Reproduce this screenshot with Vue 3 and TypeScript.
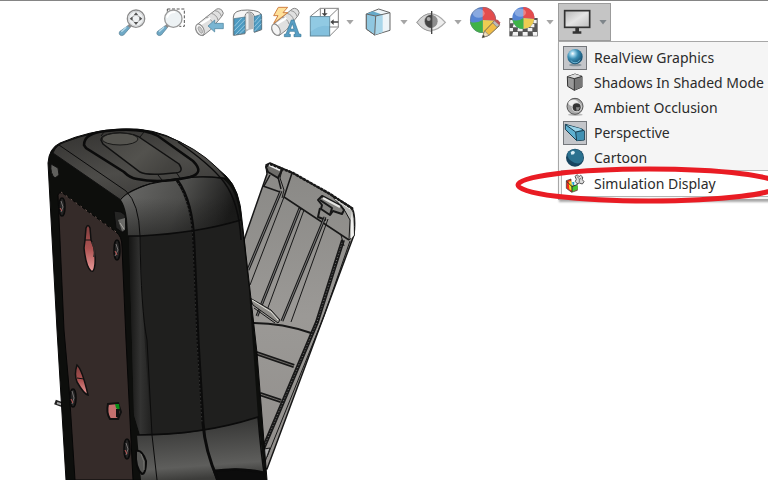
<script setup lang="ts">
import { ref } from 'vue'

interface DisplayOption {
  id: string
  label: string
  on: boolean
}

const menuOpen = ref(true)
const current = ref('simulation')
const options = ref<DisplayOption[]>([
  { id: 'realview', label: 'RealView Graphics', on: true },
  { id: 'shadows', label: 'Shadows In Shaded Mode', on: false },
  { id: 'occlusion', label: 'Ambient Occlusion', on: false },
  { id: 'perspective', label: 'Perspective', on: true },
  { id: 'cartoon', label: 'Cartoon', on: false },
  { id: 'simulation', label: 'Simulation Display', on: false },
])

function toggle(option: DisplayOption) {
  option.on = !option.on
}
</script>

<template>
  <div class="app">
    <header class="toolbar">
      <button class="tool" type="button" aria-label="Zoom to Fit">
        <svg viewBox="12 9 114 114">
          <path d="M54 77 60 83 41 105Q34 109 29 104 25 99 30 94Z" fill="#6fa9c6" stroke="#557c91" stroke-width="2" />
          <path d="M34 95 49 82" stroke="#b9dcec" stroke-width="4" />
          <path d="M53 77 60 84 66 77 59 70Z" fill="#888" />
          <circle cx="78" cy="56" r="26" fill="#f0f2f3" stroke="#8c8c8c" stroke-width="4" />
          <circle cx="78" cy="56" r="22" fill="none" stroke="#d2d4d6" stroke-width="3" />
          <path d="M78 37 85 46H71ZM78 75 71 66H85ZM59 56 68 49V63ZM97 56 88 63V49Z" fill="#555" />
          <path d="M70 51V48H73M83 48H86V51M86 61V64H83M73 64H70V61" fill="none" stroke="#999" stroke-width="2" />
        </svg>
      </button>
      <button class="tool" type="button" aria-label="Zoom to Area">
        <svg viewBox="126 9 114 114">
          <path d="M172 27H223V79H208M172 27V35" fill="none" stroke="#555" stroke-width="3" stroke-dasharray="9 5" />
          <path d="M166 77 172 83 154 105Q147 109 142 104 138 99 143 94Z" fill="#6fa9c6" stroke="#557c91" stroke-width="2" />
          <path d="M147 95 162 82" stroke="#b9dcec" stroke-width="4" />
          <path d="M165 77 172 84 178 77 171 70Z" fill="#888" />
          <circle cx="190" cy="56" r="26" fill="#edf2f4" stroke="#9a9a9a" stroke-width="4" />
          <path d="M171 53Q176 35 196 36" fill="none" stroke="#fff" stroke-width="6" />
        </svg>
      </button>
      <button class="tool" type="button" aria-label="Previous View">
        <svg viewBox="240 9 114 114">
          <path d="M315 31Q325 21 336 31 344 40 336 48L302 89 279 107Q260 106 257 87L261 74 288 52Z" fill="#e0e0e0" stroke="#858585" stroke-width="3" />
          <path d="M287 52Q304 54 309 72M304 40Q320 44 324 60M315 32Q330 34 334 49" fill="none" stroke="#999" stroke-width="3" />
          <path d="M271 73 301 54" stroke="#fff" stroke-width="7" />
          <ellipse cx="270" cy="89" rx="11" ry="18" transform="rotate(-28 270 89)" fill="#f5f5f5" stroke="#888" stroke-width="3" />
          <ellipse cx="271" cy="90" rx="5" ry="11" transform="rotate(-28 271 90)" fill="#c8c8c8" stroke="#999" stroke-width="2" />
          <path d="M294 78 314 60V70H340V86H314V96Z" fill="#79b5d2" stroke="#477d98" stroke-width="2" />
        </svg>
      </button>
      <button class="tool" type="button" aria-label="Section View">
        <svg viewBox="9 9 114 114">
          <path d="M25 51Q25 29 68 30 110 31 110 49V89L88 97V52Q87 37 72 36 59 37 60 55V101L25 106Z" fill="#f5f5f5" stroke="#777" stroke-width="3" />
          <path d="M63 46Q72 28 84 45V87Q72 87 62 96Z" fill="#b8b8b8" />
          <path d="M67 41V88" stroke="#eee" stroke-width="7" />
          <path d="M27 56 60 51V99L27 105ZM87 50 109 43V88L87 96Z" fill="#4d9bc2" stroke="#497085" stroke-width="2" />
          <path d="M28 79 50 54M28 92 60 59M31 104 60 74M43 102 60 86M88 67 106 45M88 80 109 57M88 94 109 71" stroke="#b9dced" stroke-width="2" />
        </svg>
      </button>
      <button class="tool" type="button" aria-label="Dynamic Annotation Views">
        <svg viewBox="123 9 114 114">
          <path d="M198 30Q208 20 219 30 226 38 219 47L184 90 162 107Q143 106 140 87L144 74 171 52Z" fill="#e0e0e0" stroke="#858585" stroke-width="3" />
          <path d="M171 52Q187 55 192 72M186 40Q202 44 206 60M197 32Q212 34 216 49" fill="none" stroke="#999" stroke-width="3" />
          <path d="M155 72 184 54" stroke="#fff" stroke-width="7" />
          <ellipse cx="153" cy="89" rx="11" ry="18" transform="rotate(-28 153 89)" fill="#f5f5f5" stroke="#888" stroke-width="3" />
          <path d="M160 22H188L174 38H188L146 70 159 47H146Z" fill="#ffe19a" stroke="#d08145" stroke-width="3" />
          <path d="M178 110V103L183 102 199 60H207L222 102 228 103V110H207V103L212 102 209 94H194L191 102 196 103V110ZM196 87H207L202 71Z" fill="#579ec5" stroke="#397897" stroke-width="2" fill-rule="evenodd" />
        </svg>
      </button>
      <button class="tool split" type="button" aria-label="View Orientation">
        <svg viewBox="237 9 114 114">
          <path d="M256 49 286 25H340V82L314 108M286 25V50M286 81H340M314 50 340 25" fill="none" stroke="#858585" stroke-width="3" />
          <rect x="256" y="50" width="58" height="58" fill="#83c0dd" stroke="#5e8799" stroke-width="3" />
          <path d="M257 51H313V79Q286 71 257 95Z" fill="#9bd0e8" opacity=".6" />
          <path d="M299 27V43M340 66H324" stroke="#444" stroke-width="4" />
          <path d="M290 40H308L299 49ZM326 58V75L316 66Z" fill="#444" />
        </svg>
        <i class="caret"></i>
      </button>
      <button class="tool split" type="button" aria-label="Display Style">
        <svg viewBox="54 9 114 114">
          <path d="M79 42 116 27 150 38V91L104 105 79 87Z" fill="#eef5f8" stroke="#666" stroke-width="3" />
          <path d="M79 42 107 48V104L79 87Z" fill="#8fc7e0" />
          <path d="M79 42 98 34 128 44 107 48Z" fill="#65aaca" />
          <path d="M107 48 128 44V97L105 104Z" fill="#a9d6e9" />
          <path d="M79 42 107 48 150 38M107 48 104 105M79 42V87L104 105" fill="none" stroke="#666" stroke-width="3" />
        </svg>
        <i class="caret"></i>
      </button>
      <button class="tool split" type="button" aria-label="Hide/Show Items">
        <svg viewBox="216 9 114 114">
          <path d="M231 67Q272 16 316 67 272 115 231 67Z" fill="#eee" stroke="#aaa" stroke-width="4" />
          <path d="M231 67Q250 40 274 41V94Q247 91 231 67Z" fill="#d5d5d5" stroke="#999" stroke-width="3" />
          <circle cx="273" cy="64" r="20" fill="#8d8d8d" />
          <path d="M275 44A20 20 0 0 0 275 84Z" fill="#454545" />
          <circle cx="266" cy="57" r="6" fill="#aaa" />
          <path d="M275 33V102" stroke="#444" stroke-width="4" />
        </svg>
        <i class="caret"></i>
      </button>
      <button class="tool" type="button" aria-label="Edit Appearance">
        <svg viewBox="18 9 114 114">
          <circle cx="69" cy="60" r="39" fill="#5684d3" />
          <path d="M68 60V21A39 39 0 0 1 108 62Z" fill="#e44c4d" />
          <path d="M68 60 108 62A39 39 0 0 1 68 99Z" fill="#edcc52" />
          <path d="M68 60V99A39 39 0 0 1 30 65Q46 72 68 60Z" fill="#3fb346" />
          <ellipse cx="56" cy="40" rx="18" ry="13" fill="#fff" opacity=".3" />
          <circle cx="69" cy="60" r="38" fill="none" stroke="#777" stroke-width="2" opacity=".6" />
          <path d="M67 113 74 93 103 63 118 77 87 106Z" fill="#f1bd47" stroke="#76684d" stroke-width="3" />
          <path d="M67 113 74 93 87 106Z" fill="#f2dfbb" stroke="#777" stroke-width="2" />
          <path d="M67 113 70 105 75 109Z" fill="#333" />
          <path d="M98 68 105 61 119 74 111 82Z" fill="#bbb" stroke="#777" stroke-width="2" />
          <path d="M103 62Q108 56 114 60L120 67Q121 71 118 76Z" fill="#bc5657" />
        </svg>
      </button>
      <button class="tool split" type="button" aria-label="Apply Scene">
        <svg viewBox="132 9 114 114">
          <path d="M148 54H233V109H148Z" fill="#555" />
          <path d="M151 60H162V70H150ZM218 60H230V70H220ZM161 72H173V82H158ZM211 72H223V82H211ZM149 84H159V94H149ZM174 84H188V94H172ZM203 84H217V94H203ZM159 96H174V107H157ZM188 96H203V107H188ZM218 96H231V107H219Z" fill="#f2f2f2" />
          <circle cx="190" cy="54" r="33" fill="#5684d3" />
          <path d="M190 54V21A33 33 0 0 1 223 57Z" fill="#e44c4d" />
          <path d="M190 54 223 57A33 33 0 0 1 190 87Z" fill="#edcc52" />
          <path d="M190 54V87A33 33 0 0 1 157 59Q174 66 190 54Z" fill="#3fb346" />
          <ellipse cx="181" cy="38" rx="17" ry="12" fill="#fff" opacity=".3" />
        </svg>
        <i class="caret"></i>
      </button>

      <div class="settings">
        <button class="tool settings-button" type="button" aria-label="View Settings" :aria-expanded="menuOpen" @click="menuOpen = !menuOpen">
          <svg viewBox="294 9 114 114">
            <defs>
              <linearGradient id="screen" x2="1" y2="1">
                <stop stop-color="#b5b5b5" />
                <stop offset=".5" stop-color="#e4e4e4" />
                <stop offset="1" stop-color="#bdbdbd" />
              </linearGradient>
            </defs>
            <rect x="314" y="32" width="75" height="50" fill="url(#screen)" stroke="#333" stroke-width="5" />
            <path d="M346 83H357V94H364V101H338V94H346Z" fill="#333" />
          </svg>
          <i class="caret"></i>
        </button>

        <div v-if="menuOpen" class="menu" role="menu">
          <button
            v-for="option in options"
            :key="option.id"
            type="button"
            role="menuitemcheckbox"
            :aria-checked="option.on"
            :class="['item', { current: option.id === current }]"
            @click="toggle(option)"
          >
            <span :class="['mark', { on: option.on }]">
              <svg v-if="option.id === 'realview'" viewBox="0 0 72 72">
                <defs>
                  <radialGradient id="glass" cx=".35" cy=".3" r=".7">
                    <stop stop-color="#fff" />
                    <stop offset=".2" stop-color="#9bd1e8" />
                    <stop offset=".5" stop-color="#398cb2" />
                    <stop offset="1" stop-color="#164f70" />
                  </radialGradient>
                </defs>
                <ellipse cx="37" cy="57" rx="19" ry="4" fill="#87939b" />
                <circle cx="36" cy="32" r="23" fill="url(#glass)" />
                <path d="M22 41Q37 58 53 39 49 51 36 52 26 51 22 41Z" fill="#72bad9" />
              </svg>
              <svg v-else-if="option.id === 'shadows'" viewBox="0 0 72 72">
                <path d="M13 17 36 9 57 16V48L34 58 14 46Z" fill="#999" stroke="#333" stroke-width="3" />
                <path d="M13 17 36 9 57 16 34 23Z" fill="#ddd" />
                <path d="M34 23 57 16V48L34 58Z" fill="#777" />
                <path d="M13 17 34 23 57 16M34 23V58" fill="none" stroke="#333" stroke-width="3" />
              </svg>
              <svg v-else-if="option.id === 'occlusion'" viewBox="0 0 72 72">
                <ellipse cx="37" cy="56" rx="22" ry="4" fill="#bbb" />
                <circle cx="36" cy="31" r="24" fill="#aaa" stroke="#555" stroke-width="3" />
                <ellipse cx="31" cy="21" rx="15" ry="10" fill="#eee" />
                <circle cx="41" cy="34" r="15" fill="#ddd" />
                <circle cx="41" cy="34" r="12" fill="#333" />
                <path d="M39 34H51Q48 44 41 45Z" fill="#888" />
              </svg>
              <svg v-else-if="option.id === 'perspective'" viewBox="0 0 72 72">
                <path d="M7 10 57 24 64 30V57L41 59 7 25Z" fill="#5eb0d0" stroke="#173d50" stroke-width="3" />
                <path d="M8 11 57 24 38 33Z" fill="#9ad3e8" />
                <path d="M38 33 63 28V55L41 59Z" fill="#4191b3" />
                <path d="M8 11 38 33 64 28M38 33 41 59" fill="none" stroke="#173d50" stroke-width="3" />
              </svg>
              <svg v-else-if="option.id === 'cartoon'" viewBox="0 0 72 72">
                <circle cx="36" cy="35" r="27" fill="#17445f" />
                <path d="M13 22Q28 4 47 12 61 20 61 39 54 58 34 50 11 40 13 22Z" fill="#2b718f" />
                <path d="M23 18 30 14 36 18 33 25 25 26Z" fill="#d9eef6" />
              </svg>
              <svg v-else viewBox="0 0 72 72">
                <path d="M10 26 24 21V39L43 43V55L26 61 10 49Z" fill="#f22a18" stroke="#333" stroke-width="2" />
                <path d="M17 29 25 27V37L33 42 31 58 19 52Z" fill="#f9db22" />
                <path d="M24 38 31 43 44 38V52L28 60Z" fill="#43c635" />
                <path d="M27 31 34 29V38L30 41Z" fill="#20a7cf" />
                <path d="M44 37 27 44V60M10 27 27 44" fill="none" stroke="#333" stroke-width="3" />
                <path d="M36 13 43 8 48 14 53 10 59 15 58 23 63 29 58 36 49 33 42 35 37 28 40 22Z" fill="#ddd" stroke="#555" stroke-width="3" />
                <path d="M42 14 49 20V31M55 17 50 23" fill="none" stroke="#777" stroke-width="3" />
              </svg>
            </span>
            <span>{{ option.label }}</span>
            <svg v-if="option.id === current" class="ring" viewBox="0 0 268 38" aria-hidden="true">
              <ellipse cx="134" cy="19" rx="131" ry="16" />
            </svg>
          </button>
        </div>
      </div>
    </header>

    <main class="viewport">
      <svg class="model" viewBox="40 41 330 439" role="img" aria-label="Electronics enclosure with open cover">
        <defs>
          <linearGradient id="top" x1=".1" y1="0" x2=".6" y2="1">
            <stop stop-color="#343331" />
            <stop offset=".6" stop-color="#4d4c49" />
            <stop offset="1" stop-color="#3b3a38" />
          </linearGradient>
          <linearGradient id="inset" x2="1" y2=".6">
            <stop stop-color="#43423f" />
            <stop offset=".6" stop-color="#53524e" />
            <stop offset="1" stop-color="#43423f" />
          </linearGradient>
          <linearGradient id="brow" x1="0" y1="0" x2="1" y2=".2">
            <stop stop-color="#6a6a68" />
            <stop offset=".55" stop-color="#4e4e4c" />
            <stop offset=".9" stop-color="#262625" />
            <stop offset="1" stop-color="#181817" />
          </linearGradient>
          <linearGradient id="browfade" x2="0" y2="1">
            <stop offset=".35" stop-color="#1e1e1d" stop-opacity="0" />
            <stop offset="1" stop-color="#1e1e1d" stop-opacity=".6" />
          </linearGradient>
          <linearGradient id="foot" x1=".2" y1="0" x2=".35" y2="1">
            <stop stop-color="#30302f" />
            <stop offset=".8" stop-color="#5e5e5c" />
            <stop offset="1" stop-color="#3c3c3a" />
          </linearGradient>
          <linearGradient id="corner" x2="1">
            <stop stop-color="#151514" />
            <stop offset=".5" stop-color="#333332" />
            <stop offset="1" stop-color="#20201f" />
          </linearGradient>
          <linearGradient id="cover" x2="0" y2="1">
            <stop stop-color="#898885" />
            <stop offset=".5" stop-color="#9b9996" />
            <stop offset="1" stop-color="#918e8b" />
          </linearGradient>
          <linearGradient id="slot" x2="0" y2="1">
            <stop stop-color="#813f3e" />
            <stop offset=".5" stop-color="#ac5251" />
            <stop offset="1" stop-color="#eb9b9a" />
          </linearGradient>
        </defs>

        <!-- open cover -->
        <g fill="none" stroke="#181818" stroke-linejoin="round">
          <path d="M244 240 267 174 266 165 270 163 293 173 330 194 352 208Q356 215 354 235L267 469 262 468Z" fill="url(#cover)" stroke-width="1.5" />
          <path d="M332 196 351 208Q356 215 354 236L349 240 350 220 345 211 341 206Z" fill="#b4b4b1" />
          <path d="M352 210 354 235 351 239 351 220Z" fill="#f2f2f0" stroke="none" />
          <path d="M335 199 350 209" stroke="#f2f2f0" />
          <path d="M266 167 269 164 282 170 278 178 268 172Z" fill="#6d6c69" stroke-width="2" />
          <path d="M269 165 280 170" stroke="#eee" stroke-width="2" />
          <path d="M278 177 281 189M292 173 284 197 349 240M263 186 280 192M270 175 264 186" stroke-width="1.5" />
          <path d="M282 170 280 178 284 190 282 198" />
          <path d="M318 200 322 196 341 206 344 210 342 214 333 211 330 215 321 209 322 205Z" fill="#83827f" stroke-width="2" />
          <path d="M323 198 340 207" stroke="#e5e5e2" stroke-width="2" />
          <path d="M320 200 332 208 330 215M320 208 318 217 326 220" stroke-width="2" />
          <path d="M270 164 293 173 330 194 353 209" stroke-width="2.5" stroke-dasharray="3 1" />
          <path d="M281 191 248 270" stroke-width="3" />
          <path d="M281 191 248 270" stroke="#777" stroke-width="1" />
          <path d="M284 197 250 285" />
          <path d="M300 208 257 316M325 217 282 321" stroke-width="3" />
          <path d="M343 240 317 322 263 449" stroke-width="4" />
          <path d="M300 208 257 316M325 217 282 321" stroke="#777" stroke-width="1" />
          <path d="M343 240 317 322 263 449" stroke="#777" stroke-width="1" stroke-dasharray="1 2" />
          <path d="M304 210 266 313M328 219 291 322M350 241 324 316 267 457M299 208 304 210M341 235 344 246" />
          <path d="M253 323Q282 323 311 333" stroke-width="2" />
          <path d="M250 298 271 310 280 320 278 323 253 305Z" fill="#8d8b87" />
          <path d="M252 300 271 312 278 320" stroke="#e3e3dc" />
          <path d="M254 308 275 323" />
          <path d="M256 353 294 366M260 394 281 401" stroke-width="4" />
          <path d="M256 353 294 366M260 394 281 401" stroke="#6c6965" stroke-width="1" />
          <path d="M264 449 270 448 265 462" fill="#aaa" />
        </g>
        <path d="M55 402 66 406" stroke="#222" stroke-width="5" />
        <path d="M57 403 67 406" stroke="#aaa" stroke-width="2" />

        <!-- housing -->
        <path d="M48 163Q49 148 60 143 90 130 122 129 153 127 180 142 205 156 226 176 240 189 242 220L250 290 257 353 267 480H66L57 330Z" fill="#0d0e0c" stroke="#080808" />
        <path d="M53 153Q56 145 65 142 96 130 126 130 154 129 180 142 209 156 226 178 201 175 173 179 137 183 121 200Z" fill="url(#top)" stroke="#111" />
        <path d="M121 200Q124 194 150 184 191 174 223 179 238 190 240 220 192 234 140 236L128 236Q128 210 121 200Z" fill="url(#brow)" />
        <path d="M121 200Q124 194 150 184 191 174 223 179 238 190 240 220 192 234 140 236L128 236Q128 210 121 200Z" fill="url(#browfade)" />
        <path d="M129 236H140Q197 233 241 220L249 290 258 417Q207 434 140 435L134 415Z" fill="#1f1f1e" />
        <path d="M129 236H140Q143 340 152 435H140L134 415Z" fill="url(#corner)" />
        <path d="M137 435Q200 436 258 417L265 480H141Z" fill="url(#foot)" />
        <path d="M213 471Q241 465 265 473L267 480H216Z" fill="#0c0c0c" />
        <g fill="none" stroke="#0b0b0b">
          <path d="M121 199Q128 190 150 184 200 173 226 179" />
          <path d="M59 145 126 191Q139 203 140 236 141 310 147 340L152 435 157 480" />
          <path d="M128 236H140Q198 233 241 220" stroke-width="1.5" />
          <path d="M137 435Q203 435 258 417 261 455 265 479" stroke-width="1.5" />
          <path d="M213 471Q241 467 265 473" stroke-width="2.5" />
          <path d="M178 142Q210 164 224 182 239 202 241 240" stroke-width="1.5" />
          <path d="M177 180Q193 202 194 245L198 340 203 423Q205 451 218 480" stroke-width="3" />
          <path d="M178 183Q192 205 193 245L197 340 202 423" stroke="#484847" stroke-width="1" stroke-dasharray="1 3" />
          <path d="M84 145Q84 133 106 131 142 127 158 136L193 161Q205 173 190 177 160 184 137 179 130 178 124 172L86 148Z" stroke-width="2.5" />
        </g>
        <path d="M101 140Q101 134 120 133 137 134 142 139L179 164Q185 173 174 173 147 176 140 172L103 144Z" fill="url(#inset)" stroke="#111" stroke-width="1.5" />
        <ellipse cx="120" cy="139" rx="18" ry="6" fill="#55544f" stroke="#191918" />
        <path d="M101 136 104 132M140 137 144 132M158 175 162 180M176 172 180 178" stroke="#111" />

        <!-- back plate -->
        <path d="M58 195Q59 191 64 194L116 232Q122 236 122 247L126 340 133 480H75L69 387 64 330Z" fill="#352b29" stroke="#060606" />
        <path d="M61 192 119 234" fill="none" stroke="#6e5a54" stroke-dasharray="2 4" />
        <path d="M85 240 86 228Q88 223 90 228L91 240Q96 249 95 264 94 273 91 271 86 267 84 248Z" fill="url(#slot)" stroke="#101010" stroke-width="1.5" />
        <path d="M85 240H91" stroke="#101010" />
        <path d="M92 242Q96 250 94 257" fill="none" stroke="#352b29" stroke-width="2" />
        <path d="M77 365Q82 369 88 395 84 394 77 382 74 374 77 365Z" fill="url(#slot)" stroke="#101010" stroke-width="1.5" />
        <path d="M77 378 84 379" stroke="#101010" />
        <path d="M108 404 118 403 121 412 118 419 110 419Q106 413 108 404Z" fill="#c5706e" stroke="#101010" stroke-width="2" />
        <path d="M115 404 119 404 120 411 116 408Z" fill="#078d18" />
        <path d="M116 409 120 409 119 418 116 417Z" fill="#111" />
        <g fill="#242323" stroke="#0b0b0b" stroke-width="1.5">
          <ellipse cx="62" cy="207" rx="3" ry="9" />
          <ellipse cx="117" cy="250" rx="3" ry="10" />
          <ellipse cx="73" cy="398" rx="3" ry="9" />
          <ellipse cx="127" cy="449" rx="3" ry="10" />
        </g>
        <path d="M61 201 63 207 61 212M116 244 118 250 115 256M72 391 74 398 72 404M126 443 128 449 126 455" fill="none" stroke="#757272" />
        <path d="M60 208 62 211M115 251 117 255M71 399 73 403M125 450 127 454" stroke="#bd5553" />
        <path d="M51 164 58 168 59 175 55 178Q50 174 51 164Z" fill="#60605d" stroke="#111" />
        <path d="M114 211 121 212 125 215 126 228 123 233 116 228Z" fill="#252524" stroke="#0b0b0b" />
        <path d="M118 220 125 218 125 230 122 231Z" fill="#6a6a67" />
        <path d="M120 223 124 229" stroke="#aaa9a4" />
        <path d="M136 451Q142 449 146 461 146 474 142 474 135 468 136 451Z" fill="#555553" stroke="#0a0a0a" stroke-width="2" />
        <path d="M141 454Q145 461 144 470" fill="none" stroke="#747470" />
      </svg>
    </main>
  </div>
</template>

<style>
body {
  background: #fff;
}
</style>

<style scoped>
.app {
  overflow: hidden;
  min-height: 100vh;
  font-family: 'Noto Sans', 'Open Sans', sans-serif;
  font-size: 14px;
  color: #2b2b2b;
}

.toolbar {
  display: flex;
  border-top: 1px solid #858585;
  padding: 2px 0 0 114px;
}

button {
  border: 0;
  padding: 0;
  background: none;
  font: inherit;
  color: inherit;
  text-align: left;
}

.tool {
  display: flex;
  flex: none;
  align-items: center;
}

.tool svg {
  width: 38px;
  height: 38px;
}

.caret {
  width: 16px;
  height: 5px;
  background: #a5a5a5;
  clip-path: polygon(4px 0, 12px 0, 8px 5px);
}

.settings {
  position: relative;
  flex: none;
}

.settings-button {
  width: 53px;
  background: #c5c5c5;
  outline: 1px solid #9b9b9b;
  outline-offset: -1px;
}

.settings-button .caret {
  flex: none;
  width: 14px;
  background: #7e858a;
  clip-path: polygon(3px 0, 11px 0, 7px 5px);
}

.menu {
  position: absolute;
  top: 100%;
  left: 0;
  width: 230px;
  box-sizing: border-box;
  border: 1px solid #a7a7a7;
  padding: 3px 2px 2px;
  background: #f5f5f5;
  box-shadow: 1px 2px 2px #aaa;
}

.item {
  position: relative;
  display: flex;
  align-items: center;
  gap: 7px;
  width: 100%;
  height: 25px;
  padding: 0 2px;
  white-space: nowrap;
}

.item.current {
  height: 27px;
  padding: 0 1px;
  border: 1px solid #b5b5b5;
  background: #fff;
}

.mark {
  display: flex;
  box-sizing: border-box;
  width: 24px;
  height: 24px;
}

.mark.on {
  background: #c4c6ca;
  box-shadow: inset 0 0 0 1px #74777b;
}

.mark svg {
  width: 100%;
}

.ring {
  position: absolute;
  top: -5px;
  left: -47px;
  width: 268px;
  height: 38px;
  pointer-events: none;
}

.ring ellipse {
  fill: none;
  stroke: #e91c24;
  stroke-width: 5px;
}

.viewport {
  display: flex;
  padding-left: 40px;
}

.model {
  flex: none;
  width: 330px;
  height: 439px;
}
</style>
